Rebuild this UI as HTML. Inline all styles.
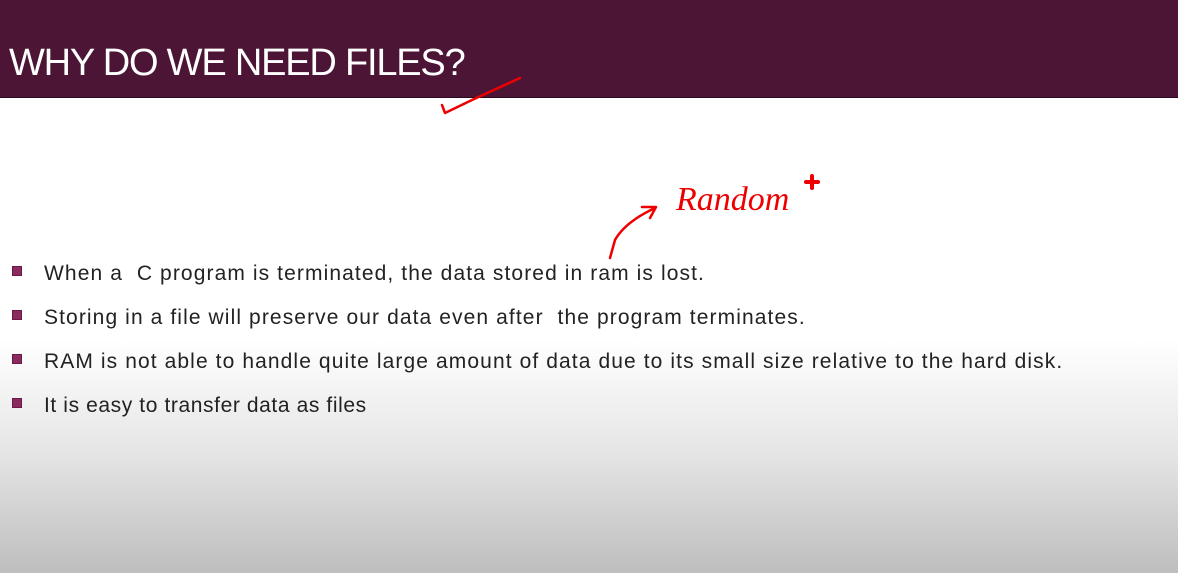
<!DOCTYPE html>
<html><head><meta charset="utf-8"><style>
html,body{margin:0;padding:0}
body{width:1178px;height:573px;overflow:hidden;position:relative;font-family:"Liberation Sans",sans-serif;
background:linear-gradient(to bottom,#fff 0px,#fff 340px,#e6e6e6 450px,#bebebe 573px);}
.hdr{position:absolute;left:0;top:0;width:1178px;height:97px;background:#4d1535;border-bottom:1px solid #2a0a1c}
.title{position:absolute;left:9px;top:42px;color:#fff;font-size:38px;letter-spacing:-1.2px;white-space:nowrap}
.li{position:absolute;left:44px;font-size:21px;letter-spacing:1.1px;color:#222;white-space:nowrap}
.b{position:absolute;left:12px;width:8px;height:8px;background:#8b2a5e;border:1px solid #6a1a45}
</style></head><body>
<div class="hdr"><div class="title">WHY DO WE NEED FILES?</div></div>
<div class="b" style="top:266px"></div><div class="li" style="top:262px">When a &nbsp;C program is terminated, the data stored in ram is lost.</div>
<div class="b" style="top:310px"></div><div class="li" style="top:306px">Storing in a file will preserve our data even after &nbsp;the program terminates.</div>
<div class="b" style="top:354px"></div><div class="li" style="top:350px">RAM is not able to handle quite large amount of data due to its small size relative to the hard disk.</div>
<div class="b" style="top:398px"></div><div class="li" style="top:394px;letter-spacing:0.6px">It is easy to transfer data as files</div>
<svg width="1178" height="573" style="position:absolute;left:0;top:0" fill="none" stroke="#e00" stroke-width="2.5" stroke-linecap="round" stroke-linejoin="round">
<path d="M442 105 L445 113 L472 100 L520 78"/>
<path d="M610 258 L615 240 Q625 222 655 208 M642 207 L656 207 L650 218"/>
<text x="676" y="210" fill="#e00" stroke="none" font-family="Liberation Serif,serif" font-style="italic" font-size="34">Random</text>
<path d="M812 176 V188 M806 182 H818" stroke-width="4"/>
</svg>
</body></html>
